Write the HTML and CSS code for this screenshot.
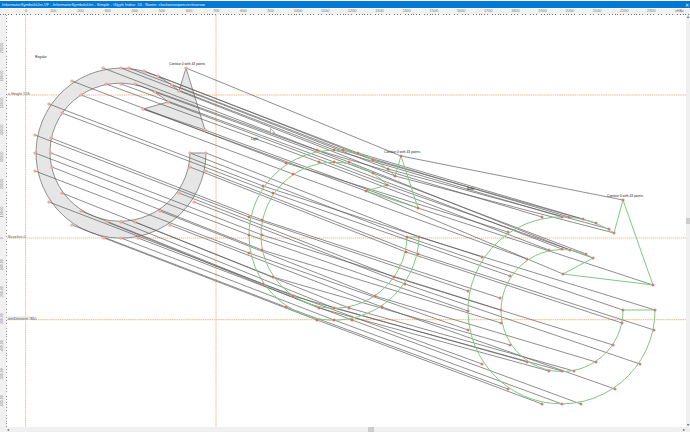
FILE: index.html
```html
<!DOCTYPE html>
<html lang="en">
<head>
  <meta charset="UTF-8">
  <title>InformatorSymbolsUni VF</title>
  <link rel="stylesheet" href="styles.css">
</head>
<body>
  <div class="window">
    <div class="titlebar">
      <span>InformatorSymbolsUni-VF - InformatorSymbolsUni - Simple - Glyph Index: 24 - Name: clockwiseopencirclearrow</span>
      <span class="close">&#x2715;</span>
    </div>

    <div class="ruler-top">
      <span>0</span><span>100</span><span>200</span><span>300</span><span>400</span><span>500</span><span>600</span><span>700</span>
      <span>800</span><span>900</span><span>1000</span><span>1100</span><span>1200</span><span>1300</span><span>1400</span><span>1500</span>
      <span>1600</span><span>1700</span><span>1800</span><span>1900</span><span>2000</span><span>2100</span><span>2200</span><span>2300</span>
      <span class="units">uHAx</span>
    </div>

    <div class="middle">
      <div class="ruler-left">
        <span>700.00</span><span>600.00</span><span>500.00</span><span>400.00</span><span>300.00</span><span>200.00</span><span>100.00</span>
        <span>0</span>
        <span>-100.00</span><span>-200.00</span><span>-300.00</span><span>-400.00</span><span>-500.00</span><span>-600.00</span>
      </div>

      <svg class="canvas" viewBox="7 14 679 413" width="679" height="413">
        <!-- metric guides -->
        <path class="guide-wide" d="M7,94H686"/>
        <path class="guide" d="M7,237H686"/>
        <path class="guide-wide" d="M7,318.7H686"/>
        <path class="guide-wide" d="M25.7,14V427"/>
        <path class="guide-wide" d="M216,14V427"/>

        <rect class="guide-tag" x="8" y="315.5" width="26" height="3.5"/>
        <text class="guide-label" x="8" y="93.5">x-Height 528</text>
        <text class="guide-label" x="8" y="236.5">Baseline 0</text>
        <text class="guide-label" x="8" y="318.5">winDescent -300</text>

        <!-- regular outline -->
        <path class="outline-first" d="M186,67L205,129L143,108L168,101A70,69 0 1 0 190,152L206,152A85,85 0 1 1 179,90Z"/>

        <!-- one line per point, through the three masters -->
        <path class="links" d="M186,67L401,155L623,199
          M205,129L418,207L653,284
          M143,108L366,190L563,273
          M168,101L387,184L593,257
          M155,91L373,172L586,253
          M135,83L349,161L570,249
          M121,83L334,161L562,248
          M106,83L319,161L549,249
          M81,94L293,173L527,258
          M62,112L273,192L510,275
          M51,137L262,219L500,297
          M51,152L262,234L501,309
          M52,166L262,249L501,322
          M62,192L273,276L510,344
          M81,210L293,295L527,361
          M107,221L319,307L549,370
          M121,221L334,307L562,370
          M135,221L349,307L574,370
          M160,210L375,295L596,361
          M179,192L394,276L613,344
          M190,166L406,251L622,322
          M190,152L407,236L623,309
          M206,152L419,236L655,309
          M206,170L418,253L654,329
          M194,201L405,283L640,363
          M170,224L382,306L615,388
          M138,237L352,319L581,403
          M121,237L334,319L562,403
          M104,237L317,319L542,403
          M72,224L286,306L508,388
          M49,201L263,283L482,363
          M35,170L249,252L468,329
          M35,152L249,234L468,310
          M35,134L249,216L468,290
          M49,103L263,185L482,256
          M72,80L286,162L508,231
          M103,67L317,149L542,216
          M121,67L334,149L562,216
          M129,67L343,149L569,216
          M144,70L358,152L583,218
          M158,75L373,159L596,222
          M172,84L388,168L609,228
          M179,90L395,175L614,232"/>

        <!-- other outlines -->
        <path class="outline-green" d="M401,155L418,207L366,190L387,184A73,73 0 1 0 407,236L419,236A85,85 0 1 1 395,175Z"/>
        <path class="outline-green" d="M623,199L653,284L563,273L593,257A61,61 0 1 0 623,309L655,309A93.5,93.5 0 1 1 614,232Z"/>

        <defs>
          <path id="points-a" d="M186,67h0M205,129h0M143,108h0M168,101h0M155,91h0M135,83h0M121,83h0M106,83h0M81,94h0M62,112h0M51,137h0M51,152h0M52,166h0M62,192h0M81,210h0M107,221h0M121,221h0M135,221h0M160,210h0M179,192h0M190,166h0M190,152h0M206,152h0M206,170h0M194,201h0M170,224h0M138,237h0M121,237h0M104,237h0M72,224h0M49,201h0M35,170h0M35,152h0M35,134h0M49,103h0M72,80h0M103,67h0M121,67h0M129,67h0M144,70h0M158,75h0M172,84h0M179,90h0"/>
          <path id="points-b" d="M401,155h0M418,207h0M366,190h0M387,184h0M373,172h0M349,161h0M334,161h0M319,161h0M293,173h0M273,192h0M262,219h0M262,234h0M262,249h0M273,276h0M293,295h0M319,307h0M334,307h0M349,307h0M375,295h0M394,276h0M406,251h0M407,236h0M419,236h0M418,253h0M405,283h0M382,306h0M352,319h0M334,319h0M317,319h0M286,306h0M263,283h0M249,252h0M249,234h0M249,216h0M263,185h0M286,162h0M317,149h0M334,149h0M343,149h0M358,152h0M373,159h0M388,168h0M395,175h0"/>
          <path id="points-c" d="M623,199h0M653,284h0M563,273h0M593,257h0M586,253h0M570,249h0M562,248h0M549,249h0M527,258h0M510,275h0M500,297h0M501,309h0M501,322h0M510,344h0M527,361h0M549,370h0M562,370h0M574,370h0M596,361h0M613,344h0M622,322h0M623,309h0M655,309h0M654,329h0M640,363h0M615,388h0M581,403h0M562,403h0M542,403h0M508,388h0M482,363h0M468,329h0M468,310h0M468,290h0M482,256h0M508,231h0M542,216h0M562,216h0M569,216h0M583,218h0M596,222h0M609,228h0M614,232h0"/>
        </defs>
        <use class="point-halo" href="#points-a"/>
        <use class="point-core-pale" href="#points-a"/>
        <use class="point-halo" href="#points-b"/>
        <use class="point-core-red" href="#points-b"/>
        <use class="point-halo" href="#points-c"/>
        <use class="point-core-blue" href="#points-c"/>

        <text class="tag" x="35" y="56.5">Regular</text>
        <text class="tag" x="251" y="139">Light</text>
        <text class="tag" x="467" y="188.5">Bold</text>
        <text class="tag" x="169" y="63.5">Contour 0 with 43 points</text>
        <text class="tag" x="384" y="151.5">Contour 0 with 43 points</text>
        <text class="tag" x="607" y="196">Contour 0 with 43 points</text>

        <path class="cursor" d="M270.5,127.5V133L272,131.8H275Z"/>
      </svg>

      <div class="scroll-v">
        <span class="arrow">&#x25B4;</span>
        <span class="thumb-v"></span>
        <span class="arrow">&#x25BE;</span>
      </div>
    </div>

    <div class="scroll-h">
      <span class="arrow">&#x25C2;</span>
      <span class="thumb-h"></span>
      <span class="arrow">&#x25B8;</span>
    </div>
  </div>
</body>
</html>
```

FILE: styles.css
```css
* {
  padding: 0;
  margin: 0;
  box-sizing: border-box;
}

body {
  background-color: #fff;
  font-family: 'Liberation Sans', sans-serif;
  overflow: hidden;
}

.window {
  width: 690px;
  height: 432px;
  display: flex;
  flex-direction: column;
}

.titlebar {
  height: 7px;
  margin-top: 1px;
  padding: 0 1px 0 2px;
  display: flex;
  justify-content: space-between;
  align-items: center;
  background-color: #0078d7;
  color: #e6f1fb;
  font-size: 4.1px;
  white-space: nowrap;
}

.close {
  font-size: 5px;
  color: #fff;
}

.ruler-top {
  height: 6px;
  margin-top: 1px;
  padding-left: 12.4px;
  display: flex;
  background-color: #f1f1f1;
  background-image: repeating-linear-gradient(90deg, #777 0 .8px, transparent .8px 2.72px);
  background-size: 100% 1px;
  background-position: bottom;
  background-repeat: no-repeat;
  color: #777;
  font-size: 3.8px;
  line-height: 5px;
}

.ruler-top span {
  width: 27.2px;
  flex: none;
  text-align: center;
}

.ruler-top .units {
  margin-left: 7px;
  width: 15px;
}

.middle {
  flex: 1;
  display: flex;
  min-height: 0;
}

.ruler-left {
  width: 7px;
  flex: none;
  padding-top: 19.4px;
  display: flex;
  flex-direction: column;
  background-color: #f1f1f1;
  background-image: repeating-linear-gradient(0deg, #999 0 .8px, transparent .8px 2.72px);
  background-size: 1px 100%;
  background-position: right;
  background-repeat: no-repeat;
  color: #777;
  font-size: 3.5px;
}

.ruler-left span {
  height: 27.2px;
  width: 5px;
  flex: none;
  writing-mode: vertical-rl;
  transform: rotate(180deg);
  text-align: center;
  line-height: 5px;
}

.canvas {
  flex: none;
  display: block;
  background-color: #fff;
}

.guide,
.guide-wide {
  fill: none;
  stroke: #f5ab72;
}

.guide {
  stroke-width: .8;
  stroke-dasharray: 1.4 .6;
}

.guide-wide {
  stroke: #f8bb8e;
  stroke-width: 1;
  stroke-dasharray: 1.6 .6;
}

.guide-tag {
  fill: #e4e4e4;
}

.guide-label {
  font-size: 3.8px;
  fill: #666;
}

.outline-first {
  fill: #e6e6e6;
  stroke: #666;
  stroke-width: .7;
  stroke-linejoin: round;
}

.links {
  fill: none;
  stroke: #5f5f5f;
  stroke-width: .7;
}

.outline-green {
  fill: none;
  stroke: #7fc883;
  stroke-width: 1;
}

.point-halo,
.point-core-pale,
.point-core-red,
.point-core-blue {
  fill: none;
  stroke-linecap: round;
}

.point-halo {
  stroke: #ef8f8a;
  stroke-width: 3.2;
}

.point-core-pale {
  stroke: #f7d9d7;
  stroke-width: 1.4;
}

.point-core-red {
  stroke: #b5372f;
  stroke-width: 1.3;
}

.point-core-blue {
  stroke: #3a4fa8;
  stroke-width: 1.2;
}

.tag {
  font-size: 3.35px;
  fill: #222;
}

.cursor {
  fill: #fff;
  stroke: #777;
  stroke-width: .5;
}

.scroll-v {
  width: 4px;
  flex: none;
  display: flex;
  flex-direction: column;
  justify-content: space-between;
  align-items: center;
  position: relative;
  background-color: #f0f0f0;
}

.thumb-v {
  position: absolute;
  top: 203px;
  left: 0;
  width: 4px;
  height: 6px;
  background-color: #cdcdcd;
}

.scroll-h {
  height: 5px;
  flex: none;
  padding: 0 5px 0 7px;
  display: flex;
  justify-content: space-between;
  align-items: center;
  position: relative;
  background-color: #f0f0f0;
}

.thumb-h {
  position: absolute;
  left: 368px;
  top: 0;
  width: 6px;
  height: 5px;
  background-color: #cdcdcd;
}

.arrow {
  font-size: 4px;
  line-height: 4px;
  color: #555;
}
```
